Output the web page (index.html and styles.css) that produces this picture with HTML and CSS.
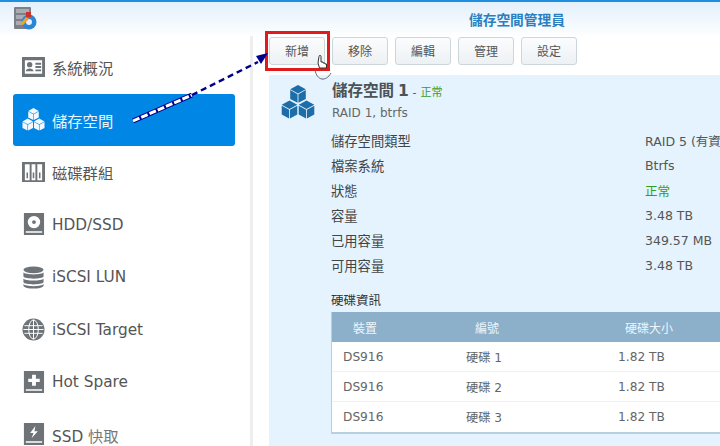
FILE: index.html
```html
<!DOCTYPE html>
<html lang="zh-Hant">
<head>
<meta charset="utf-8">
<title>儲存空間管理員</title>
<link rel="stylesheet" href="styles.css">
</head>
<body>
<svg class="defs" aria-hidden="true">
  <symbol id="cubes" viewBox="0 0 24 24">
    <g transform="translate(6.5 0)"><path d="M5.5 0L11 3 5.5 6 0 3ZM0 3.6L5.2 6.5V12.6L0 9.8ZM11 3.6L5.8 6.5V12.6L11 9.8Z"/></g>
    <g transform="translate(0.5 11)"><path d="M5.5 0L11 3 5.5 6 0 3ZM0 3.6L5.2 6.5V12.6L0 9.8ZM11 3.6L5.8 6.5V12.6L11 9.8Z"/></g>
    <g transform="translate(12.5 11)"><path d="M5.5 0L11 3 5.5 6 0 3ZM0 3.6L5.2 6.5V12.6L0 9.8ZM11 3.6L5.8 6.5V12.6L11 9.8Z"/></g>
  </symbol>
</svg>
<div class="app">
  <header class="topbar">
    <svg class="logo" viewBox="0 0 24 24">
      <rect x="1" y="0" width="17" height="22" rx="1" fill="#7d8088"/>
      <rect x="3" y="2" width="13" height="4" fill="#a9adb3"/>
      <rect x="3" y="8" width="13" height="4" fill="#a9adb3"/>
      <rect x="3" y="14" width="13" height="4" fill="#a9adb3"/>
      <circle cx="16" cy="15" r="7.5" fill="#2b86d8"/>
      <circle cx="16" cy="15" r="3" fill="#e6f0fa"/>
      <path d="M7 17L13 10 16 12 10 18Z" fill="#f0a32a"/>
      <rect x="13" y="5" width="5" height="5" fill="#c8312c"/>
    </svg>
    <h1 class="title">儲存空間管理員</h1>
  </header>
  <div class="body">
    <nav class="side">
      <a class="item">
        <svg class="ico" viewBox="0 0 24 24"><path fill-rule="evenodd" d="M0 1H24V22H0ZM3 4.5V18.5H21V4.5Z"/><circle cx="8" cy="9" r="2.8"/><path d="M4 16C4 12 12 12 12 16ZM14 7H20V9H14ZM14 10.5H20V12.5H14ZM14 14H20V16H14Z"/></svg>
        <span>系統概況</span>
      </a>
      <a class="item active">
        <svg class="ico" viewBox="0 0 24 24"><use href="#cubes"/></svg>
        <span>儲存空間</span>
      </a>
      <a class="item">
        <svg class="ico" viewBox="0 0 24 24"><path fill-rule="evenodd" d="M0 1H24V22H0ZM3 3.5V20H8V3.5ZM10 3.5V20H14V3.5ZM16 3.5V20H21V3.5Z"/><path d="M4.7 12H6.3V18H4.7ZM11.2 12H12.8V18H11.2ZM17.7 12H19.3V18H17.7Z"/></svg>
        <span>磁碟群組</span>
      </a>
      <a class="item">
        <svg class="ico" viewBox="0 0 24 24"><path fill-rule="evenodd" d="M2 0H23V23H2ZM12.5 3A6.5 6.5 0 1 0 12.5 16 6.5 6.5 0 1 0 12.5 3ZM12.5 7.5A2 2 0 1 1 12.5 11.5 2 2 0 1 1 12.5 7.5ZM4 19V20.5H21V19Z"/></svg>
        <span>HDD/SSD</span>
      </a>
      <a class="item">
        <svg class="ico" viewBox="0 0 24 24"><ellipse cx="12" cy="4" rx="10.5" ry="3.6"/><path d="M1.5 6.5C3 9.5 21 9.5 22.5 6.5V11C21 14 3 14 1.5 11ZM1.5 13C3 16 21 16 22.5 13V17C21 20 3 20 1.5 17ZM1.5 18.8C3 21.8 21 21.8 22.5 18.8V20.5C21 24.5 3 24.5 1.5 20.5Z"/></svg>
        <span>iSCSI LUN</span>
      </a>
      <a class="item">
        <svg class="ico" viewBox="0 0 24 24"><circle cx="12" cy="12" r="11.5"/><g fill="none" stroke="#fff" stroke-width="1"><ellipse cx="12" cy="12" rx="5" ry="10"/><path d="M12 2V22M2.5 8H21.5M1.5 12H22.5M2.5 16H21.5"/></g></svg>
        <span>iSCSI Target</span>
      </a>
      <a class="item">
        <svg class="ico" viewBox="0 0 24 24"><path fill-rule="evenodd" d="M2 0H23V23H2ZM10.5 4V8H6.5V11.5H10.5V15.5H14.5V11.5H18.5V8H14.5V4ZM4 19V20.5H21V19Z"/></svg>
        <span>Hot Spare</span>
      </a>
      <a class="item">
        <svg class="ico" viewBox="0 0 24 24"><path fill-rule="evenodd" d="M2 0H23V23H2ZM14 3L8.5 10.5H12L10 16 16.5 8.5H13ZM4 19V20.5H21V19Z"/></svg>
        <span>SSD <span class="cjk">快取</span></span>
      </a>
    </nav>
    <main class="main">
      <div class="toolbar">
        <button class="btn">新增</button>
        <button class="btn">移除</button>
        <button class="btn">編輯</button>
        <button class="btn">管理</button>
        <button class="btn">設定</button>
      </div>
      <section class="panel">
        <div class="panel-icon">
          <svg class="cube-big" viewBox="0 0 24 24"><use href="#cubes"/></svg>
        </div>
        <div class="panel-body">
          <div class="vol-title">儲存空間 1 <span class="dash">-</span> <span class="ok-small">正常</span></div>
          <div class="vol-sub">RAID 1, btrfs</div>
          <dl class="props">
            <div class="prop"><dt>儲存空間類型</dt><dd>RAID 5 (有資料保護)</dd></div>
            <div class="prop"><dt>檔案系統</dt><dd>Btrfs</dd></div>
            <div class="prop"><dt>狀態</dt><dd class="ok">正常</dd></div>
            <div class="prop"><dt>容量</dt><dd>3.48 TB</dd></div>
            <div class="prop"><dt>已用容量</dt><dd>349.57 MB</dd></div>
            <div class="prop"><dt>可用容量</dt><dd>3.48 TB</dd></div>
          </dl>
          <h2 class="disk-head">硬碟資訊</h2>
          <div class="table">
            <div class="thead"><span>裝置</span><span>編號</span><span>硬碟大小</span></div>
            <div class="tr"><span>DS916</span><span>硬碟 1</span><span>1.82 TB</span></div>
            <div class="tr"><span>DS916</span><span>硬碟 2</span><span>1.82 TB</span></div>
            <div class="tr"><span>DS916</span><span>硬碟 3</span><span>1.82 TB</span></div>
          </div>
        </div>
      </section>
    </main>
  </div>
  <div class="redbox"></div>
  <svg class="arrow" viewBox="0 0 720 446">
    <path d="M133 121L192 95" stroke="#00008b" stroke-width="5" fill="none"/>
    <path d="M133 121L192 95" stroke="#fff" stroke-width="3" stroke-dasharray="7 2" fill="none"/>
    <path d="M192 95L258 62" stroke="#00008b" stroke-width="2.4" stroke-dasharray="6 4" fill="none"/>
    <path d="M268 53L256 56 261 64Z" fill="#00008b"/>
  </svg>
  <svg class="hand" viewBox="0 0 18 28">
    <path d="M-1 16C1 27 10 28 15 19" fill="none" stroke="#666" stroke-width="1"/>
    <path d="M3 2.5C3 1 5 1 5 2.5V8H7V9H9V10H10.5V14H3.5L2 9Z" fill="#fff" stroke="#333" stroke-width="1"/>
  </svg>
</div>
</body>
</html>
```

FILE: styles.css
```css
* { box-sizing: border-box; }
html, body { margin: 0; height: 100%; background: #fff; overflow: hidden; }
body {
  font-family: "DejaVu Sans", "Noto Sans CJK TC", sans-serif;
  color: #555;
}
.defs { display: none; }
.app { position: relative; width: 720px; height: 446px; overflow: hidden; display: flex; flex-direction: column; }

.topbar {
  height: 36px;
  flex: none;
  border-top: 2px solid #1e8ee0;
  background: linear-gradient(#e3f0fb, #fdfeff);
  display: flex;
  align-items: center;
  padding-left: 13px;
}
.logo { width: 24px; height: 24px; flex: none; }
.title {
  margin: 0 0 0 432px;
  font-size: 13.7px;
  font-weight: 700;
  color: #2a7fc2;
  white-space: nowrap;
}

.body { flex: 1; display: flex; min-height: 0; }
.side { width: 250px; flex: none; padding: 5px 15px 0 13px; }
.item {
  height: 52.5px;
  display: flex;
  align-items: center;
  gap: 7px;
  padding-left: 9px;
  border-radius: 3px;
  font-size: 15.3px;
  color: #555;
  white-space: nowrap;
}
.ico { width: 23px; height: 23px; fill: #6e7378; flex: none; }
.active { background: #0086e5; color: #eaf5fd; }
.active .ico { fill: #f2f8fd; }
.cjk { color: #777; }

.main { flex: 1; min-width: 0; border-left: 3px solid #eeeeee; padding: 1px 0 0 16px; overflow: hidden; }
.toolbar { display: flex; gap: 7px; height: 38px; }
.btn {
  width: 56px;
  height: 28px;
  padding: 0 0 2px;
  border: 1px solid #ccd6dd;
  border-radius: 3px;
  background: linear-gradient(#fbfcfd, #edf1f4);
  color: #555;
  font: 12px "DejaVu Sans", "Noto Sans CJK TC", sans-serif;
}

.panel { height: 372px; background: #e4f3fd; display: flex; }
.panel-icon { width: 62px; flex: none; padding: 10px 0 0 12px; }
.cube-big { width: 34px; height: 34px; fill: #1d6ea8; display: block; }
.panel-body { flex: 1; min-width: 0; white-space: nowrap; }
.vol-title { margin-top: 6px; height: 20px; line-height: 20px; padding-left: 1px; font-size: 15.5px; font-weight: 700; color: #4c5358; word-spacing: -1.5px; }
.dash { font-size: 11px; font-weight: 400; }
.ok-small { font-size: 11px; font-weight: 400; color: #3a9c2e; }
.vol-sub { margin-top: 4px; padding-left: 1px; height: 16px; line-height: 16px; font-size: 12px; color: #666; }
.props { margin: 7px 0 0; }
.prop { display: flex; height: 25px; align-items: center; font-size: 13.3px; }
.prop dt { width: 314px; flex: none; color: #444; }
.prop dd { margin: 0; font-size: 12.5px; color: #555; }
.prop .ok { color: #2f9e22; }
.disk-head { margin: 14px 0 0; height: 18px; line-height: 18px; font-size: 12.5px; font-weight: 400; color: #333; }
.table { margin-top: 2px; width: 420px; border-left: 1px solid #b8cfdf; border-bottom: 2px solid #b8cfdf; background: #fff; }
.thead {
  height: 30px;
  background: #8cafca;
  color: #eef5fa;
  display: grid;
  grid-template-columns: 143px 150px 1fr;
  align-items: center;
  padding-left: 21px;
  font-size: 12px;
}
.thead span:nth-child(2) { margin-left: -21px; }
.thead span:nth-child(3) { margin-left: -21px; }
.tr {
  height: 30px;
  display: grid;
  grid-template-columns: 123px 152px 1fr;
  align-items: center;
  padding-left: 11px;
  font-size: 12.2px;
  color: #666;
  border-bottom: 1px solid #eef2f5;
}
.tr:last-child { border-bottom: 0; }

.redbox { position: absolute; left: 265px; top: 31px; width: 65px; height: 40px; border: 3px solid #e01b1b; }
.arrow { position: absolute; left: 0; top: 0; width: 720px; height: 446px; pointer-events: none; }
.hand { position: absolute; left: 316px; top: 54px; width: 18px; height: 28px; overflow: visible; }
```
